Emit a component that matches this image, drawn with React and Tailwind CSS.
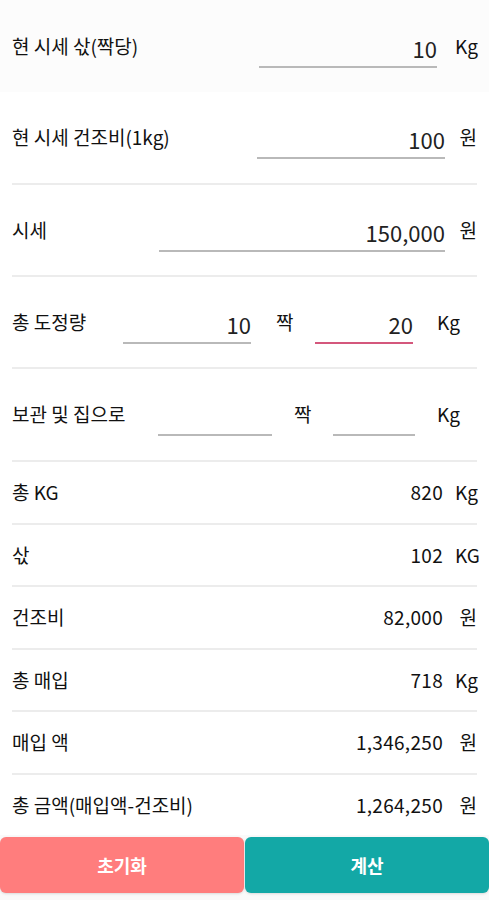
import React, { useState } from 'react';

const font = { fontFamily: '"Noto Sans CJK KR", "Noto Sans", sans-serif' };

const Field = ({ value, className, active }) => (
    <div className={`flex h-[40px] items-end justify-end border-b-2 pb-[2px] ${active ? "border-[#d4577c]" : "border-[#b9b9b9]"} ${className}`}>
        <span className="pb-[5px] text-[22px] leading-none text-[#222]">{value}</span>
    </div>
);

const Divider = () => <div className="mx-3 h-[2px] bg-[#ececec]" />;

const ResultRow = ({ label, value, unit }) => (
    <div className="flex h-[60.5px] items-center px-3 text-[19px] text-[#111]">
        <span className="flex-1">{label}</span>
        <span className="mr-[12px] tracking-[0.3px]">{value}</span>
        <span className="w-[22px] text-right">{unit}</span>
    </div>
);

const App = () => {
    const [reset] = useState(false);

    const results = [
        ["총 KG", "820", "Kg"],
        ["삯", "102", "KG"],
        ["건조비", "82,000", "원"],
        ["총 매입", "718", "Kg"],
        ["매입 액", "1,346,250", "원"],
        ["총 금액(매입액-건조비)", "1,264,250", "원"],
    ];

    return (
        <div style={font} className="flex h-[900px] w-[489px] flex-col bg-[#fafafa]">
            {/* INPUT ROWS */}
            <div className="flex h-[92px] items-center bg-[#fcfcfc] px-3 text-[19px] text-[#111]">
                <span className="flex-1">현 시세 삯(짝당)</span>
                <Field value={reset ? "" : "10"} className="mt-[3px] w-[178px]" />
                <span className="ml-[18px] w-[22px] text-right">Kg</span>
            </div>

            <div className="bg-white">
                <div className="flex h-[91px] items-center px-3 text-[19px] text-[#111]">
                    <span className="flex-1">현 시세 건조비(1kg)</span>
                    <Field value="100" className="mt-[3px] w-[188px]" />
                    <span className="ml-[14px] w-[18px] text-right">원</span>
                </div>
                <Divider />
                <div className="flex h-[90px] items-center px-3 text-[19px] text-[#111]">
                    <span className="flex-1">시세</span>
                    <Field value="150,000" className="mt-[3px] w-[286px]" />
                    <span className="ml-[14px] w-[18px] text-right">원</span>
                </div>
                <Divider />
                <div className="flex h-[90px] items-center px-3 text-[19px] text-[#111]">
                    <span className="w-[111px]">총 도정량</span>
                    <Field value="10" className="mt-[3px] w-[128px]" />
                    <span className="ml-[25px] w-[39px]">짝</span>
                    <Field value="20" active className="mt-[3px] w-[98px]" />
                    <span className="ml-[24px]">Kg</span>
                </div>
                <Divider />
                <div className="flex h-[91px] items-center px-3 text-[19px] text-[#111]">
                    <span className="w-[146px]">보관 및 집으로</span>
                    <Field value="" className="mt-[3px] w-[114px]" />
                    <span className="ml-[22px] w-[39px]">짝</span>
                    <Field value="" className="mt-[3px] w-[82px]" />
                    <span className="ml-[22px]">Kg</span>
                </div>
                <Divider />

                {/* RESULT ROWS */}
                {results.map(([label, value, unit], i) => (
                    <React.Fragment key={label}>
                        <ResultRow label={label} value={value} unit={unit} />
                        {i < results.length - 1 && <Divider />}
                    </React.Fragment>
                ))}
            </div>

            {/* BUTTONS */}
            <div className="mt-[2px] flex h-[56px] gap-[1px]">
                <button className="flex-1 rounded-md bg-[#ff7d7d] text-[18px] font-bold text-white shadow">초기화</button>
                <button className="flex-1 rounded-md bg-[#13a8a6] text-[18px] font-bold text-white shadow">계산</button>
            </div>
        </div>
    );
};

export default App;
